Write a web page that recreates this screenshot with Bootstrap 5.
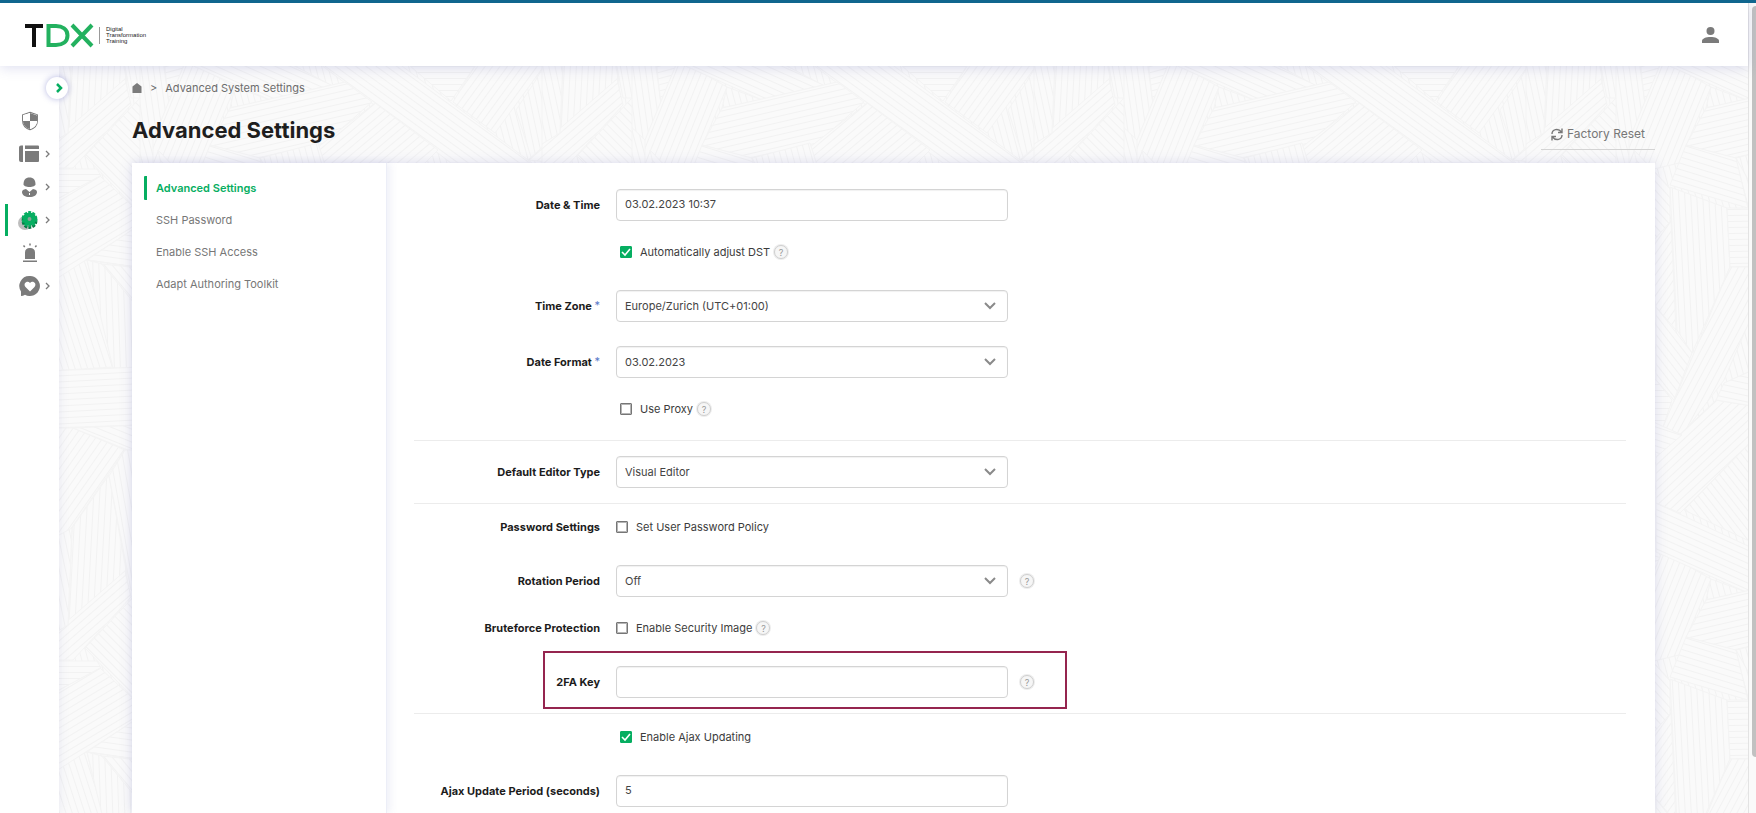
<!DOCTYPE html>
<html lang="en">
<head>
<meta charset="utf-8">
<meta name="viewport" content="width=device-width, initial-scale=1">
<title>Advanced Settings</title>
<link href="https://cdn.jsdelivr.net/npm/bootstrap@5.3.0/dist/css/bootstrap.min.css" rel="stylesheet">
<style>
:root{--green:#06ae61;--grey:#7b7b7b}
body{font-family:Inter,"Liberation Sans",sans-serif;font-size:11px;line-height:16px;color:#3c3c3c;background:#fff}
.app{height:100vh;overflow:hidden;border-top:3px solid #10668e}
.topbar{height:63px;padding:0 29px 0 24px;box-shadow:0 2px 12px rgba(90,95,180,.2);z-index:3}
.view{width:0;min-width:0}
.gutter{width:8px;background:#fafafa;border-left:1px solid #e3e3e3;padding:3px 0 0 3px}
.thumb{height:93%;background:#c1c1c1;border-radius:4px 0 0 4px}
.sidebar{width:59px;padding-top:38px;z-index:2;box-shadow:0 0 10px rgba(90,95,180,.12)}
.sidebar a{height:33px;padding-left:18px;color:var(--grey)}
.sidebar a.current{color:var(--green)}
.sidebar a.current::before{content:"";position:absolute;left:5px;top:1px;width:3px;height:32px;background:var(--green)}
.toggler{width:22px;height:22px;left:46px;top:11px;color:var(--green);box-shadow:0 0 6px rgba(70,75,180,.4)}
.content-area{background:#fafafa;min-width:0}
.weave{inset:0;width:100%;height:100%}
.inner{padding:0 93px 0 73px}
.crumbs{height:44px;color:#6d6d6d;gap:8px}
.titlebar{height:53px}
h1{font-size:22px;line-height:28px;font-weight:700;color:#1e1e1e;padding-top:6px}
.reset{font-size:12px;line-height:16px;color:#777;border:0;border-bottom:1px solid #d4d4d4;background:none;padding:0 10px 7px;border-radius:0}
.panel{box-shadow:0 0 12px rgba(90,95,180,.2)}
.submenu{width:255px;padding:13px 12px;border-right:1px solid #eceef7;box-shadow:3px 0 8px rgba(90,95,180,.1)}
.submenu a{height:24px;margin-bottom:8px;padding-left:9px;border-left:3px solid transparent;color:#777}
.submenu a.active{border-color:var(--green);color:var(--green);font-weight:600;border-radius:1px}
.settings{padding:26px 29px 0 27px;min-width:0}
.field{min-height:32px;column-gap:16px}
.field>.name{width:186px;text-align:right;font-weight:700;color:#1c1c1c;white-space:nowrap}
.name sup{color:#5a78c8;font-size:11px;top:-1px;font-weight:400}
.control{width:392px;height:32px;font-size:11px;line-height:16px;color:#444;border:1px solid #d4d4d4;border-radius:4px;padding:6px 8px 8px;box-shadow:inset 0 1px 1px rgba(0,0,0,.06)}
select.control{padding:7px 8px;background:#fff url("data:image/svg+xml,%3Csvg xmlns='http://www.w3.org/2000/svg' viewBox='0 0 12 8'%3E%3Cpath d='M1 1l5 5 5-5' fill='none' stroke='%238a8a8a' stroke-width='2'/%3E%3C/svg%3E") no-repeat right 11px center/12px 8px}
.ticks{gap:8px}
.ticks.inset-4{padding-left:4px}
.form-check-input.tick{width:12px;height:12px;margin:0;border:1px solid #767676;outline:1px solid #b5b5b5;outline-offset:-2px;border-radius:1px}
.form-check-input.tick:checked{border-color:var(--green);outline:0;background:var(--green) url("data:image/svg+xml,%3Csvg xmlns='http://www.w3.org/2000/svg' viewBox='0 0 10 10'%3E%3Cpath d='M1 5l3 3 5-6' fill='none' stroke='%23fff' stroke-width='1.6'/%3E%3C/svg%3E") center/10px 10px no-repeat}
.help{width:14px;height:14px;font-size:9px;line-height:11px;border:1px solid #cfcfcf;border-radius:50%;color:#999;background:#f6f6f6;padding:0;box-shadow:0 0 0 1px #ededed}
.ticks .help,.field>.help{margin-left:-4px}
.s{margin-top:15px}.m{margin-top:22px}.l{margin-top:24px}.xs{margin-top:7px}
.rule{height:1px;background:#ececec;margin-top:15px}
.frame{left:129px;width:524px;top:-15px;bottom:-11px;border:2px solid #95254f;pointer-events:none}
</style>
</head>
<body>
<div class="app d-flex">
  <div class="view flex-grow-1 d-flex flex-column">
    <header class="topbar bg-white position-relative d-flex align-items-center justify-content-between flex-shrink-0">
      <a href="#" aria-label="TDX home">
        <svg width="126" height="28" viewBox="0 0 126 28">
          <g fill="none" stroke-width="4"><path d="M1 5H19M10 5V26" stroke="#111"/><path d="M24.500 5V24H32C38 24 43.500 21 43.500 14.500S38 5 32 5H22.500" stroke="#23b15f"/><path d="M48 4L68 25M68 4L48 25" stroke="#23b15f"/></g>
          <path d="M75.500 6V23" stroke="#999"/>
          <g font-family="Liberation Sans,sans-serif" font-size="6" fill="#222"><text x="82" y="10">Digital</text><text x="82" y="16">Transformation</text><text x="82" y="22">Training</text></g>
        </svg>
      </a>
      <a href="#" aria-label="Account"><svg width="17" height="16" viewBox="0 0 17 16" fill="#7b7b7b"><circle cx="8.500" cy="4" r="4"/><path d="M0 16V14C0 11.500 4 10 8.500 10S17 11.500 17 14V16Z"/></svg></a>
    </header>
    <div class="d-flex flex-grow-1 position-relative">
      <nav class="sidebar bg-white position-relative flex-shrink-0" aria-label="Main">
        <button class="toggler btn bg-white rounded-circle border-0 p-0 position-absolute d-flex align-items-center justify-content-center" aria-label="Expand menu"><svg class="ms-1" width="7" height="10" viewBox="0 0 7 10"><path d="M1 1L5 5L1 9" fill="none" stroke="currentColor" stroke-width="2.500"/></svg></button>
        <a href="#" class="d-flex align-items-center position-relative" aria-label="Security"><svg width="24" height="20" viewBox="0 0 24 20"><path d="M12 1.500L19.200 4V9.500C19.200 14 16 17.200 12 18.500C8 17.200 4.800 14 4.800 9.500V4Z" fill="#fff" stroke="currentColor" stroke-width="1.500"/><path d="M12 2V10H5V4ZM12 10H19C19 14 16 17 12 18Z" fill="#fff"/><path d="M12 2V10H19V4ZM12 10H5C5 14 8 17 12 18Z" fill="#fff"/><path d="M12 2V10H5V4.500ZM12 10H19C19 14 16 17 12 18Z" fill="#fff"/><path d="M12 10V2L19 4.500V10ZM12 10V18C8 17 5 14 5 10Z" fill="currentColor"/></svg></a>
        <a href="#" class="d-flex align-items-center position-relative" aria-label="Pages"><svg width="22" height="18" viewBox="0 0 22 18" fill="currentColor"><path d="M3 .5H5V17H3Q1 17 1 15V2.500Q1 .5 3 .5ZM7 .5H20Q21 .5 21 1.500V4H7ZM7 6H21V16Q21 17 20 17H7Z"/></svg><svg class="ms-1" width="8" height="8" viewBox="0 0 8 8"><path d="M2 1L5 4L2 7" fill="none" stroke="currentColor" stroke-width="1.300"/></svg></a>
        <a href="#" class="d-flex align-items-center position-relative" aria-label="Users"><svg width="22" height="20" viewBox="0 0 22 20" fill="currentColor"><path d="M5.500 7.500C5.500 3 7.500 .5 11.500 .5S17.500 3 17.500 7.500C17.500 8.500 15 10 11.500 10S5.500 8.500 5.500 7.500ZM4 15Q4 12.500 8 12L11.500 15L15 12Q19 12.500 19 15C19 18 16 20 11.500 20S4 18 4 15Z"/><path d="M11.500 16V18" stroke="#fff"/></svg><svg class="ms-1" width="8" height="8" viewBox="0 0 8 8"><path d="M2 1L5 4L2 7" fill="none" stroke="currentColor" stroke-width="1.300"/></svg></a>
        <a href="#" class="current d-flex align-items-center position-relative" aria-label="Settings"><svg width="22" height="22" viewBox="0 0 22 22"><circle cx="7" cy="14" r="7" fill="#bdbdbd"/><circle cx="11.500" cy="12" r="6.400" fill="none" stroke="#087a45" stroke-width="3" stroke-dasharray="2.800 1.220"/><circle cx="11.500" cy="10" r="6.400" fill="none" stroke="currentColor" stroke-width="3" stroke-dasharray="2.800 1.220"/><circle cx="11.500" cy="10" r="4.200" fill="#8ba397" stroke="currentColor" stroke-width="4.500"/></svg><svg class="ms-1" width="8" height="8" viewBox="0 0 8 8"><path d="M2 1L5 4L2 7" fill="none" stroke="#7b7b7b" stroke-width="1.300"/></svg></a>
        <a href="#" class="d-flex align-items-center position-relative" aria-label="Alerts"><svg width="24" height="20" viewBox="0 0 24 20"><path d="M7 16V9.500Q7 5 12 5T17 9.500V16ZM5 17.500H19V19H5Z" fill="currentColor"/><path d="M12 .5V2.500M5.500 2.500L6.800 4M18.500 2.500L17.200 4" stroke="currentColor" stroke-width="1.500"/></svg></a>
        <a href="#" class="d-flex align-items-center position-relative" aria-label="Feedback"><svg width="22" height="20" viewBox="0 0 22 20"><path d="M11.500 0A10 10 0 1 1 7 18.700Q5 20 3 20V15.500A10 10 0 0 1 11.500 0Z" fill="currentColor"/><path d="M12 15.500L7.500 11C4.500 7.500 9.500 4 12 7C14.500 4 19.500 7.500 16.500 11Z" fill="#fff"/></svg><svg class="ms-1" width="8" height="8" viewBox="0 0 8 8"><path d="M2 1L5 4L2 7" fill="none" stroke="currentColor" stroke-width="1.300"/></svg></a>
      </nav>
      <main class="content-area flex-grow-1 position-relative">
        <svg class="weave position-absolute" id="weave" aria-hidden="true"></svg>
        <div class="inner position-relative h-100 d-flex flex-column">
          <nav class="crumbs d-flex align-items-center" aria-label="Breadcrumb"><a href="#" aria-label="Home" class="d-flex"><svg width="10" height="10" viewBox="0 0 10 10"><path d="M5 0L9.500 3.500V10H.5V3.500Z" fill="#7b7b7b"/></svg></a><span>&gt;</span><a href="#" class="text-reset text-decoration-none">Advanced System Settings</a></nav>
          <div class="titlebar d-flex justify-content-between align-items-start">
            <h1 class="mb-0">Advanced Settings</h1>
            <button class="reset btn d-flex align-items-center gap-1 mt-3"><svg width="12" height="13" viewBox="0 0 12 13" fill="none" stroke="#777" stroke-width="1.400"><path d="M1 6C1 1.500 7 -.5 10.500 4M11 7C11 11.500 5 13.500 1.500 9M11 .5V4.500H7M1 12.500V8.500H5"/></svg>Factory Reset</button>
          </div>
          <section class="panel bg-white d-flex flex-grow-1">
            <nav class="submenu flex-shrink-0 d-flex flex-column" aria-label="Settings sections">
              <a class="active d-flex align-items-center text-decoration-none" href="#">Advanced Settings</a>
              <a class="d-flex align-items-center text-decoration-none" href="#">SSH Password</a>
              <a class="d-flex align-items-center text-decoration-none" href="#">Enable SSH Access</a>
              <a class="d-flex align-items-center text-decoration-none" href="#">Adapt Authoring Toolkit</a>
            </nav>
            <form class="settings flex-grow-1">
              <div class="field d-flex align-items-center"><label class="name" for="dt">Date &amp; Time</label><input id="dt" class="form-control control" value="03.02.2023 10:37"></div>
              <div class="field d-flex align-items-center s"><span class="name"></span><div class="ticks inset-4 d-flex align-items-center"><input class="form-check-input tick" type="checkbox" id="dst" checked><label for="dst">Automatically adjust DST</label><button type="button" class="help">?</button></div></div>
              <div class="field d-flex align-items-center m"><label class="name" for="tz">Time Zone <sup>*</sup></label><select id="tz" class="form-select control"><option>Europe/Zurich (UTC+01:00)</option></select></div>
              <div class="field d-flex align-items-center l"><label class="name" for="df">Date Format <sup>*</sup></label><select id="df" class="form-select control"><option>03.02.2023</option></select></div>
              <div class="field d-flex align-items-center s"><span class="name"></span><div class="ticks inset-4 d-flex align-items-center"><input class="form-check-input tick" type="checkbox" id="px"><label for="px">Use Proxy</label><button type="button" class="help">?</button></div></div>
              <div class="rule"></div>
              <div class="field d-flex align-items-center s"><label class="name" for="ed">Default Editor Type</label><select id="ed" class="form-select control"><option>Visual Editor</option></select></div>
              <div class="rule"></div>
              <div class="field d-flex align-items-center xs"><span class="name">Password Settings</span><div class="ticks d-flex align-items-center"><input class="form-check-input tick" type="checkbox" id="pw"><label for="pw">Set User Password Policy</label></div></div>
              <div class="field d-flex align-items-center m"><label class="name" for="rp">Rotation Period</label><select id="rp" class="form-select control"><option>Off</option></select><button type="button" class="help">?</button></div>
              <div class="field d-flex align-items-center s"><span class="name">Bruteforce Protection</span><div class="ticks d-flex align-items-center"><input class="form-check-input tick" type="checkbox" id="si"><label for="si">Enable Security Image</label><button type="button" class="help">?</button></div></div>
              <div class="field d-flex align-items-center m position-relative"><label class="name" for="fa">2FA Key</label><input id="fa" class="form-control control"><button type="button" class="help">?</button><div class="frame position-absolute"></div></div>
              <div class="rule"></div>
              <div class="field d-flex align-items-center xs"><span class="name"></span><div class="ticks inset-4 d-flex align-items-center"><input class="form-check-input tick" type="checkbox" id="aj" checked><label for="aj">Enable Ajax Updating</label></div></div>
              <div class="field d-flex align-items-center m"><label class="name" for="ap">Ajax Update Period (seconds)</label><input id="ap" class="form-control control" value="5"></div>
            </form>
          </section>
        </div>
      </main>
    </div>
  </div>
  <div class="gutter flex-shrink-0"><div class="thumb"></div></div>
</div>
<script src="https://cdn.jsdelivr.net/npm/bootstrap@5.3.0/dist/js/bootstrap.bundle.min.js"></script>
<script>
// Woven line background: each patch is [line angle, polygon points], repeated on a square tile.
const T = 492, patches = [
[36,"300,49 340,20 402,66 532,163 451,163"],[126,"475,66 544,66 495,133 453,102"],[0,"410,66 475,66 451,101"],
[78,"534,83 544,66 565,66 561,128 532,160 516,110"],[92,"563,60 616,60 618,80 562,130"],[-40,"617,80 624,108 560,163 528,160"],
[82,"617,60 655,60 661,103 647,142 621,117"],[-15,"656,60 678,66 661,105"],[112,"678,60 690,66 727,87 695,163 645,175 645,140"],
[24,"672,11 764,54 823,85 762,100 672,60"],[75,"727,87 762,100 722,108"],[-13,"722,108 837,82 864,102 817,143 749,158 702,145"],
[-40,"810,147 867,103 930,150 880,200 820,200"],[75,"752,158 810,143 825,190 770,190"],[17,"702,145 752,158 764,208 686,185"],
[87,"686,187 743,208 746,267 708,353 693,330"],[-1,"743,208 780,208 780,266 746,267"],[118,"746,267 780,267 766,320 740,380 698,435 679,427"],
[52,"672,307 708,353 690,400 672,380"],[125,"660,250 687,220 692,330 672,307"],[48,"650,150 686,188 686,222 670,240"],
[-43,"732,400 780,408 764,445 696,513 672,503 672,457"],[52,"700,510 764,445 780,548"],[12,"740,383 780,365 780,408 732,400"],
[0,"660,370 672,380 688,400 679,427 660,427"],[18,"665,420 698,435 672,457"],
[72,"50,276 87,260 114,367 50,371"],[88,"87,260 102,264 140,310 140,368 113,368"],[50,"102,264 140,268 140,310"],
[-3,"50,371 140,367 140,425 50,428"],[125,"50,428 73,428 125,450 59,546 50,546"],[22,"73,428 140,425 140,455"],
[93,"72,528 109,475 126,570 68,625"],[80,"125,450 109,476 131,590 140,590 140,450"],[-41,"50,636 125,571 131,597 73,660 50,660"],
[78,"50,540 72,528 68,625 50,636"],[0,"50,661 97,661 101,668 50,695"],[45,"140,590 140,705 85,648"],
[-31,"50,695 100,668 140,705 140,717 50,775"],[8,"132,722 87,752 140,760"]];
const angles = [...new Set(patches.map(p => p[0]))];
let body = "";
for (const [a, pts] of patches)
  for (const dx of [-2*T, -T, 0, T]) for (const dy of [-T, 0, T])
    body += `<polygon points="${pts}" transform="translate(${dx} ${dy})" fill="url(#l${a})" stroke="#f4f4f4"/>`;
document.getElementById("weave").innerHTML = "<defs>" + angles.map(a =>
  `<pattern id="l${a}" width="6" height="6" patternUnits="userSpaceOnUse" patternTransform="rotate(${a})"><rect width="6" height="6" fill="#fafafa"/><rect width="6" height="1" fill="#f2f2f2"/></pattern>`).join("") +
  `<pattern id="tile" x="-59" y="-66" width="${T}" height="${T}" patternUnits="userSpaceOnUse"><rect width="${T}" height="${T}" fill="url(#l75)"/>${body}</pattern></defs><rect width="100%" height="100%" fill="url(#tile)"/>`;
</script>
</body>
</html>
